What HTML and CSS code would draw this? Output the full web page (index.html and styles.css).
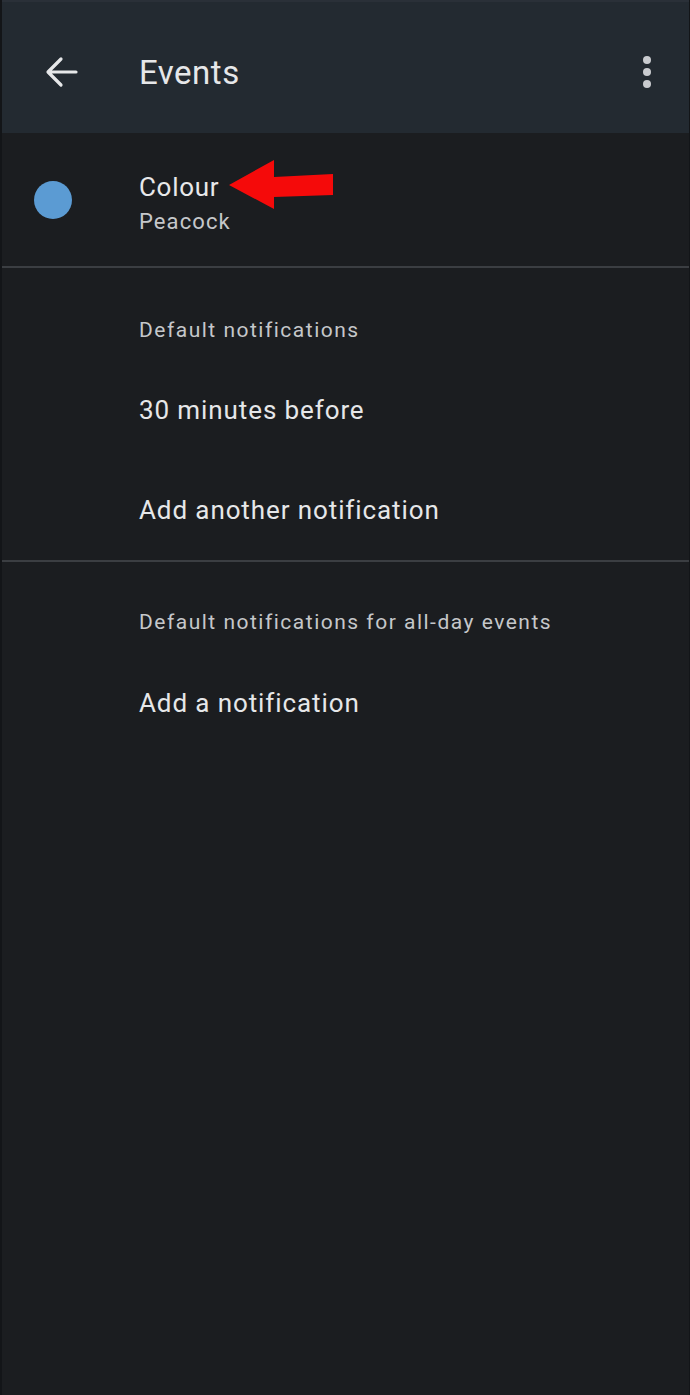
FILE: index.html
```html
<!DOCTYPE html>
<html lang="en">
<head>
<meta charset="utf-8">
<title>Events</title>
<link rel="stylesheet" href="styles.css">
</head>
<body>
<div class="screen">
  <header class="appbar">
    <button class="icon-btn back" aria-label="Back">
      <svg width="34" height="34" viewBox="0 0 34 34"><path d="M31 17H4M16 4L3 17l13 13" fill="none" stroke="#e6e7e9" stroke-width="3.2" stroke-linecap="round" stroke-linejoin="round"/></svg>
    </button>
    <h1 class="title">Events</h1>
    <button class="icon-btn more" aria-label="More options">
      <span class="dot"></span><span class="dot"></span><span class="dot"></span>
    </button>
  </header>

  <section class="colour-row">
    <span class="swatch"></span>
    <div class="colour-text">
      <div class="primary">Colour</div>
      <div class="secondary">Peacock</div>
    </div>
    <svg class="pointer" width="110" height="56" viewBox="0 0 110 56"><polygon points="0,26 45,1 45,18 104,15 104,36 45,38 45,50" fill="#f50a0a"/></svg>
  </section>

  <section class="group">
    <div class="group-head first">Default notifications</div>
    <div class="item">30 minutes before</div>
    <div class="item">Add another notification</div>
  </section>

  <section class="group last">
    <div class="group-head">Default notifications for all-day events</div>
    <div class="item">Add a notification</div>
  </section>
</div>
</body>
</html>
```

FILE: styles.css
```css
* { box-sizing: border-box; }
html, body { margin: 0; padding: 0; }
body {
  background: #1b1d20;
  font-family: Roboto, "Noto Sans", "Liberation Sans", sans-serif;
  color: #e4e4e6;
}
.screen {
  width: 690px;
  height: 1395px;
  background: #1b1d20;
  border-left: 2px solid #131518;
  border-right: 1px solid #131518;
  display: flex;
  flex-direction: column;
  overflow: hidden;
}
.appbar {
  height: 133px;
  flex: none;
  background: #232a31;
  border-top: 2px solid #2a3038;
  display: flex;
  align-items: center;
  padding-top: 9px;
}
.icon-btn {
  background: none;
  border: 0;
  padding: 0;
  display: flex;
  align-items: center;
  justify-content: center;
}
.back {
  width: 34px;
  height: 34px;
  margin-left: 43px;
}
.title {
  margin: 0 0 0 60px;
  font-size: 33px;
  font-weight: 400;
  color: #e6e7e9;
  letter-spacing: 0.5px;
  flex: 1;
}
.more {
  flex-direction: column;
  gap: 4px;
  width: 10px;
  margin-right: 37px;
}
.dot {
  width: 8px;
  height: 8px;
  border-radius: 50%;
  background: #c9cbcf;
}
.colour-row {
  position: relative;
  height: 135px;
  flex: none;
  display: flex;
  align-items: center;
  border-bottom: 2px solid #3b3e42;
}
.swatch {
  width: 38px;
  height: 38px;
  border-radius: 50%;
  background: #5b9bd3;
  margin-left: 32px;
  flex: none;
}
.colour-text {
  margin-left: 67px;
  padding-top: 9px;
}
.primary {
  font-size: 26px;
  line-height: 34px;
  letter-spacing: 0.7px;
  color: #e8e8ea;
}
.secondary {
  font-size: 22px;
  line-height: 34px;
  padding-top: 1px;
  letter-spacing: 1.1px;
  color: #c5c7ca;
}
.pointer {
  position: absolute;
  left: 227px;
  top: 26px;
}
.group {
  flex: none;
  border-bottom: 2px solid #3b3e42;
  padding-left: 137px;
}
.group.last { border-bottom: 0; }
.group-head {
  font-size: 21px;
  line-height: 28px;
  color: #c5c7ca;
  padding-top: 46px;
  padding-bottom: 17px;
  letter-spacing: 1.5px;
}
.group-head.first { padding-top: 48px; padding-bottom: 16px; }
.item {
  height: 100px;
  display: flex;
  align-items: center;
  font-size: 26px;
  letter-spacing: 0.9px;
  color: #e6e7e9;
}
```
